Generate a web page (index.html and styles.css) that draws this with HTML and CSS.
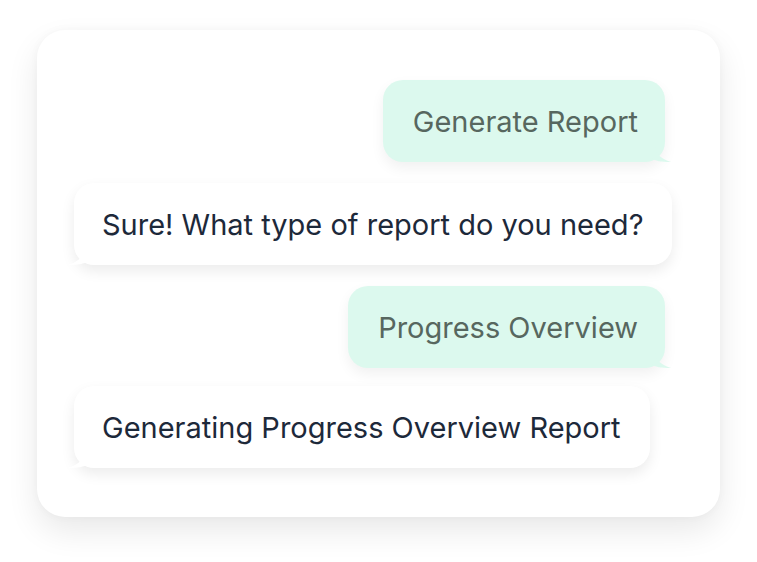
FILE: index.html
```html
<!DOCTYPE html>
<html lang="en">
<head>
<meta charset="utf-8">
<link rel="stylesheet" href="styles.css">
</head>
<body>
<div class="card">
  <div class="row row-out"><div class="bubble out">Generate Report<svg class="tail tail-out" viewBox="0 0 20 16"><path d="M0 0 L4 0 C5 8 10 13 20 16 C10 16 4 15 0 12 Z"/></svg></div></div>
  <div class="row row-in"><div class="bubble in">Sure! What type of report do you need?<svg class="tail tail-in" viewBox="0 0 20 16"><path d="M20 0 L16 0 C15 8 10 13 0 16 C10 16 16 15 20 12 Z"/></svg></div></div>
  <div class="row row-out"><div class="bubble out">Progress Overview<svg class="tail tail-out" viewBox="0 0 20 16"><path d="M0 0 L4 0 C5 8 10 13 20 16 C10 16 4 15 0 12 Z"/></svg></div></div>
  <div class="row row-in row-last"><div class="bubble in">Generating Progress Overview Report<svg class="tail tail-in" viewBox="0 0 20 16"><path d="M20 0 L16 0 C15 8 10 13 0 16 C10 16 16 15 20 12 Z"/></svg></div></div>
</div>
</body>
</html>
```
FILE: styles.css
```css
html, body {
  margin: 0;
  padding: 0;
  background: #ffffff;
}
body {
  font-family: Inter, "Noto Sans", sans-serif;
  padding: 30px 0 45px 37px;
}
.card {
  width: 683px;
  height: 487px;
  box-sizing: border-box;
  background: #ffffff;
  border-radius: 28px;
  box-shadow: 0 14px 32px rgba(0, 0, 0, 0.09), 0 0 10px rgba(0, 0, 0, 0.03);
  padding: 50px 55px 50px 37px;
  display: flex;
  flex-direction: column;
  gap: 21px;
}
.row {
  display: flex;
}
.row-out {
  justify-content: flex-end;
}
.row-in {
  justify-content: flex-start;
}
.row-last {
  margin-top: -3px;
}
.bubble {
  position: relative;
  height: 82px;
  box-sizing: border-box;
  display: flex;
  align-items: center;
  border-radius: 20px;
  font-size: 29px;
  letter-spacing: 0;
  white-space: nowrap;
}
.out {
  background: #dcf9ee;
  color: #57675f;
  padding: 0 27px 0 30px;
  box-shadow: 0 6px 14px rgba(0, 0, 0, 0.06);
}
.in {
  background: #ffffff;
  color: #1d293a;
  padding: 0 29px 0 28px;
  box-shadow: 0 6px 14px rgba(0, 0, 0, 0.08);
}
.tail {
  position: absolute;
  bottom: 0;
  width: 20px;
  height: 16px;
}
.tail-out {
  right: -6px;
  fill: #dcf9ee;
}
.tail-in {
  left: -6px;
  fill: #ffffff;
}
```
